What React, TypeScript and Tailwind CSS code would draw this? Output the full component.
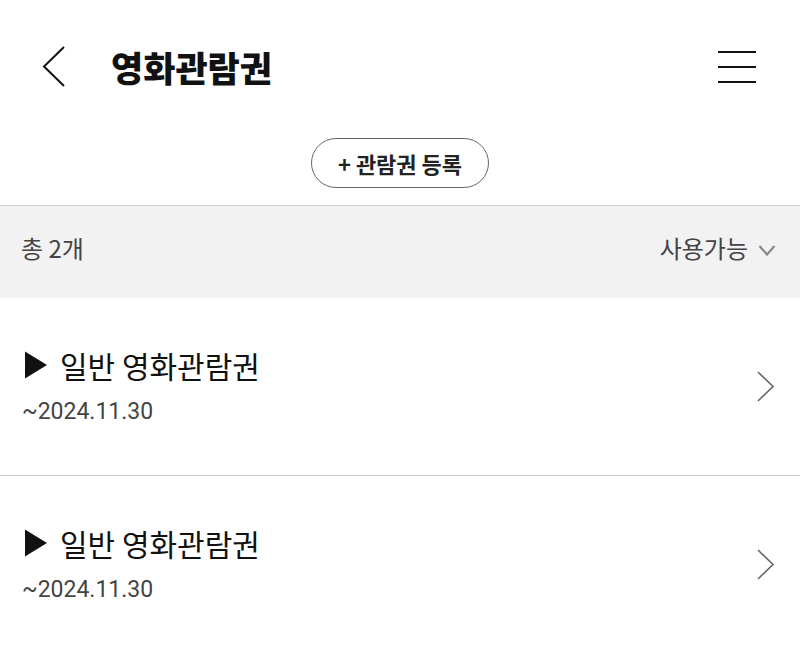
import React from "react";

const tickets = [
  { name: "일반 영화관람권", until: "~2024.11.30" },
  { name: "일반 영화관람권", until: "~2024.11.30" },
];

const App = () => {
  return (
    <div className="w-[800px] h-[652px] bg-white overflow-hidden font-['Noto_Sans_CJK_KR','Noto_Sans',sans-serif]">
      {/* top bar */}
      <div className="h-[134px] flex items-center justify-between pl-[42px] pr-[43px]">
        <div className="flex items-center">
          <svg width="24" height="42" viewBox="0 0 24 42" className="shrink-0">
            <polyline points="22,1 2,20.5 22,40" fill="none" stroke="#111" strokeWidth="2" />
          </svg>
          <h1 className="ml-[45px] text-[35px] leading-[44px] font-black text-[#111]">영화관람권</h1>
        </div>
        <svg width="40" height="34" viewBox="0 0 40 34">
          <line x1="1" y1="2" x2="39" y2="2" stroke="#111" strokeWidth="2" />
          <line x1="1" y1="17" x2="39" y2="17" stroke="#111" strokeWidth="2" />
          <line x1="1" y1="32" x2="39" y2="32" stroke="#111" strokeWidth="2" />
        </svg>
      </div>

      <div className="flex justify-center pt-[4px] pb-[17px]">
        <button className="w-[178px] h-[50px] rounded-full border border-[#666] text-[22px] leading-[28px] font-bold text-[#222] flex items-center justify-center">
          + 관람권 등록
        </button>
      </div>

      {/* filter bar */}
      <div className="h-[93px] border-t border-[#cfcfcf] bg-[#f2f2f2] flex items-center justify-between pl-[21px] pr-[24px] pb-[8px]">
        <span className="text-[24px] leading-[30px] text-[#444]">총 2개</span>
        <div className="flex items-center gap-[10px]">
          <span className="text-[24px] leading-[30px] text-[#444]">사용가능</span>
          <svg width="18" height="13" viewBox="0 0 18 13" className="mt-[4px]">
            <polyline points="1.5,2 9,10.5 16.5,2" fill="none" stroke="#888" strokeWidth="2.2" />
          </svg>
        </div>
      </div>

      {tickets.map((t, i) => (
        <div key={i} className="h-[178px] border-b border-[#c8c8c8] flex items-center justify-between pl-[24px] pr-[25px]">
          <div className="flex flex-col">
            <div className="flex items-center h-[36px]">
              <svg width="24" height="28" viewBox="0 0 24 28" className="shrink-0">
                <polygon points="1,0.5 23,14 1,27.5" fill="#111" />
              </svg>
              <span className="ml-[12px] text-[30px] leading-[36px] text-[#111]">{t.name}</span>
            </div>
            <span className="mt-[15px] text-[23px] leading-[28px] text-[#444] font-['Roboto',sans-serif] -ml-[2px]">{t.until}</span>
          </div>
          <svg width="18" height="32" viewBox="0 0 18 32">
            <polyline points="1,1 16,15.5 1,30" fill="none" stroke="#666" strokeWidth="1.6" />
          </svg>
        </div>
      ))}
    </div>
  );
};

export default App;
